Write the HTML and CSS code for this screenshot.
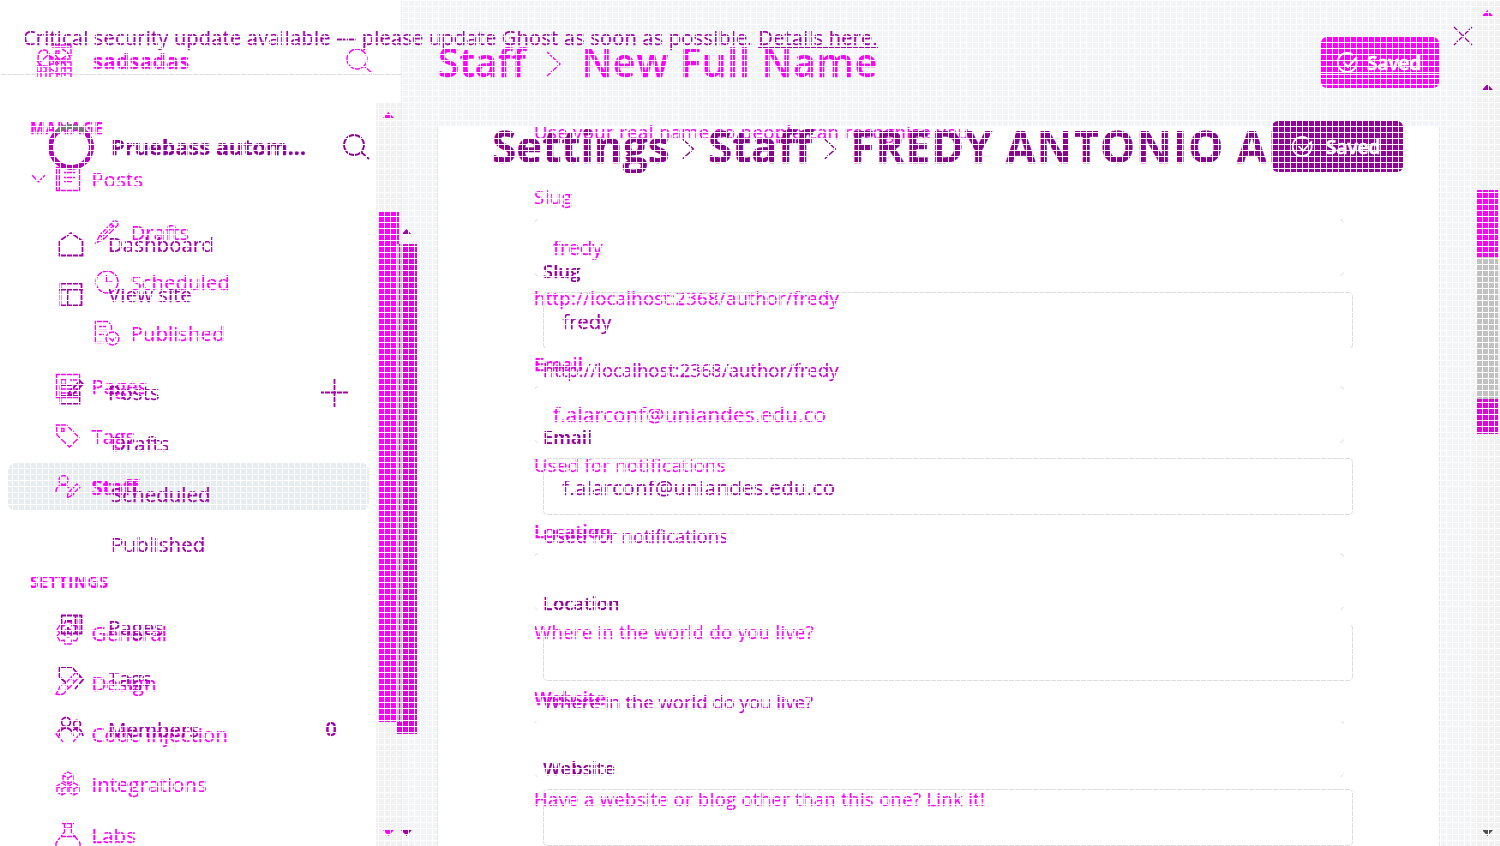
FILE: index.html
```html
<!DOCTYPE html>
<html lang="en"><head><meta charset="utf-8"><title>Staff settings</title><link rel="stylesheet" href="styles.css"></head>
<body>
<svg width="0" height="0" class="defs"><defs>
<symbol id="search" viewBox="0 0 28 28"><circle cx="12" cy="12" r="10"/><path d="M19 19l8 7"/></symbol>
<symbol id="home" viewBox="0 0 26 26"><path d="M1.500 10L13 2l11.500 8v14.500h-23z"/></symbol>
<symbol id="layout" viewBox="0 0 26 26"><path d="M2.500 2.500h21v22h-21zM1 8.500h24M9.500 8.500v16"/></symbol>
<symbol id="doc" viewBox="0 0 26 26"><path d="M1.500 1.500h23v23h-23zM4.500 2v22M9 6.500h11M9 11.500h11M9 15.500h8"/></symbol>
<symbol id="pen" viewBox="0 0 26 26"><path d="M2 24l4-8L20 2q4-1 4 4L10 20zM6 16l4 4M17 5l4 4M9 17L20 6"/></symbol>
<symbol id="clock" viewBox="0 0 26 26"><circle cx="13" cy="13" r="11"/><path d="M12.500 6v7h6"/></symbol>
<symbol id="published" viewBox="0 0 26 26"><path d="M10 22.500H1.500v-21h12l4 4v5M5 6.500h7M5 10.500h8M5 14.500h5"/><circle cx="18.500" cy="18.500" r="6.500"/><path d="M15.500 18l3 3 3-4"/></symbol>
<symbol id="page" viewBox="0 0 26 26"><path d="M1.500 1.500h23v23h-23zM6 6.500h5v5H6zM15 7h7M15 12h7M6 16h16M6 20h16"/></symbol>
<symbol id="tag" viewBox="0 0 26 26"><path d="M1.500 2h10L24 14.500 14.500 24 2 12z"/><path d="M6 5.500h3v3H6z"/></symbol>
<symbol id="tag2" viewBox="0 0 26 26"><path d="M1.500 2h12L25 14.500 17 24M1.500 2v10l7 6"/></symbol>
<symbol id="staff" viewBox="0 0 26 26"><circle cx="8.500" cy="6" r="4.500"/><path d="M1 18q0-7 7-7 4 0 6 3M12 24l1-5 9-9 3 3-9 9zM15 17l4 4"/></symbol>
<symbol id="write" viewBox="0 0 26 26"><path d="M14 6H2.500v18.500h19V13M10 17l2-5L22 2l3 3-10 10zM3 17h19"/></symbol>
<symbol id="book" viewBox="0 0 26 26"><path d="M3.500 1.500h20v18h-20zM17.500 2v17M20.500 2v17M7 7h7M10 13v6"/></symbol>
<symbol id="members" viewBox="0 0 26 26"><circle cx="8" cy="6" r="4.500"/><circle cx="19" cy="8" r="3.500"/><path d="M1.500 20q0-8 6.500-8 6 0 7 8M15 14q8-4 10 6"/></symbol>
<symbol id="gear" viewBox="0 0 26 26"><circle cx="13" cy="13" r="4"/><path d="M10 2h6l1 4 4-1 3 5-3 3 3 3-3 5-4-1-1 4h-6l-1-4-4 1-3-5 3-3-3-3 3-5 4 1z"/></symbol>
<symbol id="brush" viewBox="0 0 26 26"><path d="M10 14L21 2l4 4-11 12zM10 14q-5 0-6 5l-3 5q9 2 10-4l3-2M16 8l4 4"/></symbol>
<symbol id="code" viewBox="0 0 26 26"><path d="M8 5l-7 8 7 8M18 5l7 8-7 8"/></symbol>
<symbol id="cubes" viewBox="0 0 26 26"><path d="M13 1l5 3v6l-5 3-5-3V4zM8 4l5 3 5-3M13 7v6M7 12l5 3v6l-5 3-5-3v-6zM2 15l5 3 5-3M7 18v6M19 12l5 3v6l-5 3-5-3v-6zM14 15l5 3 5-3M19 18v6"/></symbol>
<symbol id="flask" viewBox="0 0 26 26"><path d="M7 1.500h12M9.500 2v8L1 21v4h24v-4l-8.500-11V2M5 14.500h16M10 6h6"/></symbol>
<symbol id="right" viewBox="0 0 16 26"><path d="M1 1l13 12L1 25"/></symbol>
<symbol id="down" viewBox="0 0 14 8"><path d="M1 1l6 6 6-6"/></symbol>
<symbol id="plus" viewBox="0 0 28 28"><path d="M0 13.500h28M13.500 0v28"/></symbol>
<symbol id="close" viewBox="0 0 20 20"><path d="M1 1l18 18M19 1L1 19"/></symbol>
<symbol id="check" viewBox="0 0 22 22"><path d="M19 7a9.500 9.500 0 1 1-3-4M6.500 10l4.500 5 9-10"/></symbol>
<symbol id="logo" viewBox="0 0 38 34"><path d="M16 1h20v11M17 4h17M3 15q0-9 6-9t6 9-6 8-6-8M21 7h3v3h-3zM27 5q9 4 8 12M1 16l7 7M16 12l8 8M23 14l9 8M19 9l8 11M18 20l13-8M2 33V22h9v11M6 23v10M15 33V20h7v13M26 33V18h10v15M27 24h9M16 25l9 6M2 28h9M16 29h19M30 19v13M5 18l8-7M12 8l8 12M20 15h14"/></symbol>
</defs></svg>

<div class="base">
  <div class="base-nav"><div class="base-rule"></div></div>
  <div class="base-main"><div class="base-paper"></div></div>
  <div class="gutter"></div><div class="track"></div>
</div>

<div class="screen rose">
  <aside class="side">
    <div class="brand"><svg class="logo"><use href="#logo"/></svg><b>sadsadas</b><svg class="find"><use href="#search"/></svg></div>
    <div class="cap">MANAGE</div>
    <nav class="nav">
      <div class="row posts"><svg class="chev"><use href="#down"/></svg><svg><use href="#doc"/></svg><span>Posts</span></div>
      <div class="sub"><div class="row"><svg><use href="#pen"/></svg><span>Drafts</span></div>
      <div class="row"><svg><use href="#clock"/></svg><span>Scheduled</span></div>
      <div class="row"><svg><use href="#published"/></svg><span>Published</span></div></div>
      <div class="row"><svg><use href="#page"/></svg><span>Pages</span></div>
      <div class="row"><svg><use href="#tag"/></svg><span>Tags</span></div>
      <div class="row active"><svg><use href="#staff"/></svg><span>Staff</span></div>
    </nav>
    <div class="cap second">SETTINGS</div>
    <nav class="nav low">
      <div class="row"><svg><use href="#gear"/></svg><span>General</span></div>
      <div class="row"><svg><use href="#brush"/></svg><span>Design</span></div>
      <div class="row"><svg><use href="#code"/></svg><span>Code injection</span></div>
      <div class="row"><svg><use href="#cubes"/></svg><span>Integrations</span></div>
      <div class="row"><svg><use href="#flask"/></svg><span>Labs</span></div>
    </nav>
  </aside>
  <main class="main">
    <header><h1><span>Staff</span><svg><use href="#right"/></svg><span class="name">New Full Name</span></h1><button><svg><use href="#check"/></svg>Saved</button></header>
    <form>
      <p class="hint first">Use your real name so people can recognise you</p>
      <div class="field"><label class="light">Slug</label><div class="box">fredy</div><p class="hint url">http://localhost:2368/author/fredy</p></div>
      <div class="field"><label>Email</label><div class="box mail">f.alarconf@uniandes.edu.co</div><p class="hint">Used for notifications</p></div>
      <div class="field"><label>Location</label><div class="box"></div><p class="hint">Where in the world do you live?</p></div>
      <div class="field"><label>Website</label><div class="box"></div><p class="hint">Have a website or blog other than this one? Link it!</p></div>
    </form>
  </main>
</div>

<div class="screen plum">
  <div class="alert"><span>Critical security update available –– please update Ghost as soon as possible. <a>Details here.</a></span><svg><use href="#close"/></svg></div>
  <div class="cols">
  <aside class="side">
    <div class="brand"><i class="ring"></i><b>Pruebass autom...</b><svg class="find"><use href="#search"/></svg></div>
    <nav class="nav">
      <div class="row"><svg><use href="#home"/></svg><span>Dashboard</span></div>
      <div class="row"><svg><use href="#layout"/></svg><span>View site</span></div>
      <div class="row gap"><svg><use href="#write"/></svg><span>Posts</span><svg class="add"><use href="#plus"/></svg></div>
      <div class="row child"><span>Drafts</span></div>
      <div class="row child"><span>Scheduled</span></div>
      <div class="row child"><span>Published</span></div>
      <div class="row gap2"><svg><use href="#book"/></svg><span>Pages</span></div>
      <div class="row"><svg><use href="#tag2"/></svg><span>Tags</span></div>
      <div class="row"><svg><use href="#members"/></svg><span>Members</span><b class="count">0</b></div>
    </nav>
  </aside>
  <main class="main">
    <header><h1><span>Settings</span><svg><use href="#right"/></svg><span>Staff</span><svg><use href="#right"/></svg><span class="name">FREDY ANTONIO AL</span></h1><button><svg><use href="#check"/></svg>Saved</button></header>
    <form>
      <div class="field"><label>Slug</label><div class="box">fredy</div><p class="hint url">http://localhost:2368/author/fredy</p></div>
      <div class="field"><label>Email</label><div class="box mail">f.alarconf@uniandes.edu.co</div><p class="hint">Used for notifications</p></div>
      <div class="field short"><label>Location</label><div class="box"></div><p class="hint">Where in the world do you live?</p></div>
      <div class="field"><label>Website</label><div class="box"></div></div>
    </form>
  </main>
  </div>
</div>

<div class="bars">
  <i class="thumb a"></i><i class="thumb b"></i><i class="thumb c"></i><i class="thumb d"></i>
  <i class="thumb e"></i><i class="thumb f"></i><i class="thumb g"></i>
  <i class="up u1"></i><i class="up u2"></i><i class="up u3"></i><i class="up u4"></i>
  <i class="dn d1"></i><i class="dn d2"></i><i class="dn d3"></i>
</div>
<div class="mesh"></div>
</body></html>
```
FILE: styles.css
```css
*{box-sizing:border-box}
body{margin:0;width:1500px;height:846px;overflow:hidden;position:relative;background:#fff;font-family:"Open Sans","Noto Sans",sans-serif;font-size:20.5px;line-height:24px}
svg{fill:none;stroke:currentColor;stroke-width:1.4;flex:none;display:block}
.defs{position:absolute}
p,h1{margin:0}
.screen,.base,.mesh,.bars{position:absolute;inset:0;overflow:hidden}
.screen{-webkit-text-stroke:.25px currentColor}
.base{display:grid;grid-template-columns:401px 1075px 24px}
.base-nav{grid-area:1/1;height:846px}
.base-rule{margin-top:74px;height:1px;background:#ddd}
.base-main{grid-area:1/2;background:#f3f4f7;padding:126px 37px 0;border-left:1px solid #e9eaed}
.base-paper{background:#fff;height:720px;margin-left:-1px;box-shadow:1px 0 0 #e6e7ea,-1px 0 0 #e6e7ea}
.track{grid-area:1/3;background:#f1f1f1}
.gutter{grid-area:1/1;justify-self:end;width:25px;margin-top:103px;background:#f1f1f1}
.mesh{background:repeating-linear-gradient(90deg,#fff 0 1px,transparent 1px 6px),repeating-linear-gradient(#fff 0 1px,transparent 1px 6px)}

.rose{color:#f0f;display:flex}
.side{width:401px;flex:none}
.brand{display:flex;align-items:center}
.rose .brand{height:36px;margin-top:43px;padding-left:35px}
.logo{width:38px;height:34px}
.rose .brand b{margin-left:20px;width:252px;letter-spacing:.35px}
.find{width:28px;height:28px}
.cap{font-size:15.500px;font-weight:700;margin:37px 0 0 30px;letter-spacing:.9px}
.rose .nav{margin-top:13.700px}
.row{display:flex;align-items:center;height:50.600px;padding-left:55px}
.row svg{width:26px;height:26px}
.row span{margin-left:10.500px}
.rose .posts{padding-left:31px}
.rose .posts .chev{width:15px;height:9px;margin-right:9px}
.rose .sub{padding:2px 0 2.500px 39px}
.active{height:48px;margin:1px 32px 1.600px 8px;padding-left:47px;border-radius:8px;background:#e7ecf1;font-weight:700}
.active span{letter-spacing:-.3px}
.second{margin-top:59px;letter-spacing:.75px}
.rose .low{margin-top:13.500px}
.main{flex:1;min-width:0}
.rose header{height:126px;padding:37px 61px 0 37px;display:flex;justify-content:space-between}
h1{display:flex;align-items:center;white-space:nowrap;height:52px;line-height:48px}
h1 span{padding-bottom:2px}
.rose h1{font-size:39px;font-weight:600}
.rose .name{letter-spacing:.85px}
.rose h1 svg{width:16px;height:26px;margin:2px 20px 0}
button{display:flex;align-items:center;height:51px;border:0;border-radius:6px;color:#fff;background:#f0f;font:600 19px "Open Sans",sans-serif;padding:1px 0 0 16px;-webkit-text-stroke:.6px #fff}
.rose button{width:118px;background:linear-gradient(#f0f 37px,#fff 37px 38px,#f0f 38px)}
button svg{width:22px;height:22px;margin-right:8px;stroke-width:2}
form{width:810px}
.rose form{margin-left:133px}
.field{height:167px}
label{display:block;height:33px;font-size:18.500px;font-weight:600;line-height:22px}
.light{font-weight:400;letter-spacing:.5px}
.box{height:57px;line-height:57px;padding-left:19px;border-radius:4px}
.mail{letter-spacing:.27px}
.rose .box{background:linear-gradient(135deg,transparent 2px,#e6eaed 2px 3px,transparent 3px) 0 0/5px 5px no-repeat,linear-gradient(225deg,transparent 2px,#e6eaed 2px 3px,transparent 3px) 100% 0/5px 5px no-repeat,linear-gradient(45deg,transparent 2px,#e6eaed 2px 3px,transparent 3px) 0 100%/5px 5px no-repeat,linear-gradient(315deg,transparent 2px,#e6eaed 2px 3px,transparent 3px) 100% 100%/5px 5px no-repeat}
.hint{font-size:18.500px;margin-top:12px;white-space:nowrap;line-height:22px;letter-spacing:.32px}
.rose .field .hint{margin-top:11px}
.rose .url{letter-spacing:.28px}
.first{margin-top:0;height:60px;line-height:11px;letter-spacing:.4px}

.plum{color:#a300aa}
.plum svg{stroke-width:1.800}
.alert{display:flex;justify-content:space-between;height:74px;padding:26px 27px 0 23px;font-size:20px;white-space:nowrap;letter-spacing:.21px}
.alert svg{width:20px;height:20px;stroke-width:1.300}
.alert a{text-decoration:underline;text-underline-offset:2px}
.cols{display:flex}
.plum .brand{margin-top:47px;height:52px;padding-left:48px;color:#900098}
.ring{width:46px;height:46px;border:5px solid #b400bc;border-top-color:#777;border-radius:50%}
.plum .brand b{width:231px;margin-left:17px;font-size:22px;letter-spacing:-.15px;line-height:22px;padding-bottom:2px}
.plum .nav{margin-top:45.500px}
.plum .row{padding-left:58px}
.plum .row span{margin-left:24px}
.plum .row.child{padding-left:87px}
.plum .row.gap{margin-top:47.500px}
.plum .row.gap2{margin-top:32.500px}
.plum .row .add{width:28px;height:28px;margin:2px 0 0 161px}
.count{margin-left:126px;font-weight:600;padding-bottom:1px}
.plum header{display:flex;padding:47px 0 0 91px}
.plum h1{font-size:44px;font-weight:700;color:#8c0091;width:780px;overflow:hidden}
.plum h1 svg{width:13px;height:22px;margin:4px 13px 0 12.500px}
.plum h1 .name{letter-spacing:.95px}
.plum button{width:131px;background:#93009a;padding-left:20px}
.plum button svg{margin-right:12px}
.plum form{margin:87px 0 0 142px}
.plum .field{height:166px}
.plum .short{height:165px}
.plum label{color:#930099;height:32px}
.plum .box{height:57px;border:1px solid #ddd;line-height:57px;padding-left:18px}
.plum .hint{color:#c600cf;margin-top:10px;letter-spacing:0}

.thumb,.up,.dn{position:absolute}
.a{left:379px;top:212px;width:20px;height:510px;background:#f0f}
.b{left:397px;top:244px;width:20px;height:490px;background:#e000e0}
.c{left:397px;top:244px;width:5px;height:478px;background:#c1c1c1}
.d{left:399px;top:244px;width:1px;height:478px;background:#e000e0}
.e{left:1477px;top:190px;width:21px;height:67px;background:#f0f}
.f{left:1477px;top:257px;width:21px;height:142px;background:#c1c1c1}
.g{left:1477px;top:399px;width:21px;height:35px;background:#e000e0}
.up{width:11px;height:6px;background:#f0f;clip-path:polygon(50% 0,100% 100%,0 100%)}
.dn{width:11px;height:6px;background:#f0f;clip-path:polygon(0 0,100% 0,50% 100%)}
.u1{left:383px;top:112px}.u2{left:401px;top:229px;background:#a300aa}.u3{left:1482px;top:10px}.u4{left:1482px;top:84px;background:#a300aa}
.d1{left:383px;top:830px}.d2{left:401px;top:830px;background:#a300aa}.d3{left:1482px;top:830px;background:#505050}
```
